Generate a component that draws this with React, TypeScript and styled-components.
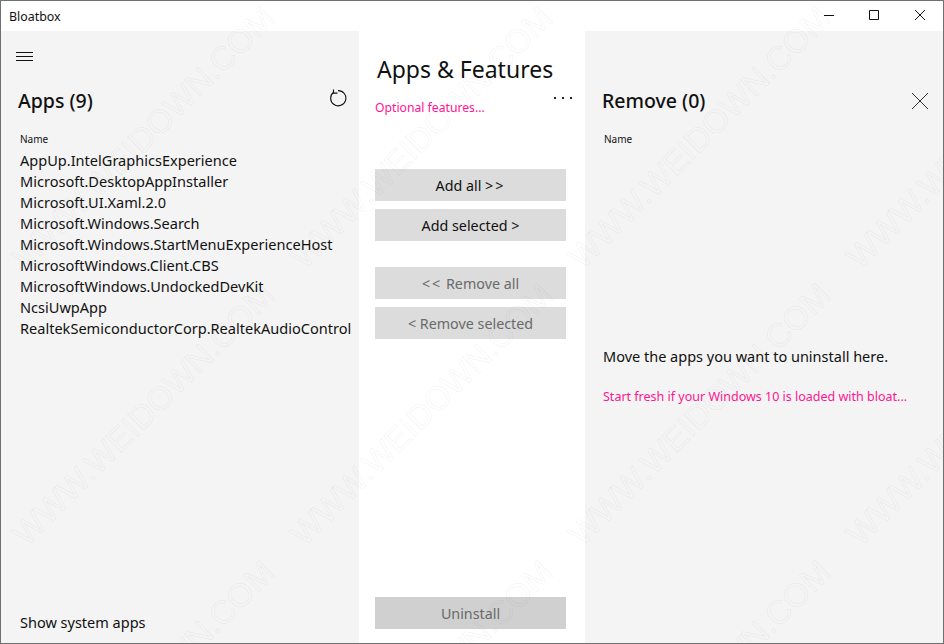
import React from 'react'
import styled, { createGlobalStyle } from 'styled-components'

const GlobalStyle = createGlobalStyle`
    html, body {
        margin: 0;
        padding: 0;
        background: #fff;
    }
    * {
        box-sizing: border-box;
    }
    svg {
        display: block;
    }
`

const Window = styled.div`
    position: relative;
    width: 944px;
    height: 644px;
    display: flex;
    flex-direction: column;
    overflow: hidden;
    background: #fff;
    border: 1px solid #707070;
    font-family: 'Noto Sans', 'Open Sans', sans-serif;
    color: #111;
`

const TitleBar = styled.header`
    height: 30px;
    flex: none;
    display: flex;
    align-items: center;
    justify-content: space-between;
    padding-left: 8px;
    font-size: 12.4px;
`

const WindowButtons = styled.div`
    display: flex;
`

const WindowButton = styled.div`
    width: 46px;
    height: 30px;
    padding-bottom: 2px;
    display: flex;
    align-items: center;
    justify-content: center;
`

const Columns = styled.main`
    flex: 1;
    display: grid;
    grid-template-columns: 358px 226px 1fr;
    min-height: 0;
`

const SidePanel = styled.section`
    position: relative;
    background: #f4f4f4;
    display: flex;
    flex-direction: column;
`

const LeftPanel = styled(SidePanel)`
    padding: 20px 0 11px 17px;
`

const RightPanel = styled(SidePanel)`
    padding: 58px 0 0 17px;
`

const Menu = styled.div`
    width: 17px;
    height: 12px;
    margin: 0 0 26px -2px;
`

const PanelHead = styled.div`
    display: flex;
    justify-content: space-between;
    align-items: center;
    padding-right: 11px;
`

const RefreshButton = styled.div`
    margin: -6px 1px 0 0;
`

const PanelTitle = styled.h2`
    margin: 0;
    font-size: 19.5px;
    line-height: 24px;
    font-weight: 500;
`

const ColumnLabel = styled.div`
    font-size: 10px;
    line-height: 14px;
    margin: 19px 0 4px 2px;
`

const AppList = styled.ul`
    list-style: none;
    margin: 0 0 0 2px;
    padding: 0;
    flex: 1;
`

const AppRow = styled.li`
    font-size: 14.55px;
    line-height: 21px;
    white-space: nowrap;
`

const Footer = styled.div`
    font-size: 14.5px;
    line-height: 20px;
    margin-left: 2px;
`

const CenterPanel = styled.section`
    position: relative;
    display: flex;
    flex-direction: column;
    padding: 22px 19px 14px 16px;
`

const Heading = styled.h1`
    margin: 0 0 0 2px;
    font-size: 23px;
    line-height: 32px;
    font-weight: 400;
`

const Link = styled.a`
    color: #ff1493;
    font-size: 12.5px;
    line-height: 18px;
`

const OptionalLink = styled(Link)`
    margin-top: 14px;
    font-size: 12.2px;
`

const More = styled.div`
    position: absolute;
    top: 66px;
    right: 13px;
    display: flex;
    gap: 6px;
`

const Dot = styled.span`
    width: 2px;
    height: 2px;
    background: #222;
`

const Actions = styled.div`
    display: flex;
    flex-direction: column;
    margin-top: 52px;
`

const Action = styled.button<{ $disabled?: boolean; $gap?: number }>`
    height: 32px;
    margin-bottom: ${(props) => props.$gap ?? 8}px;
    border: 0;
    padding: 0;
    font-family: inherit;
    font-size: 14.3px;
    background: #dcdcdc;
    color: ${(props) => (props.$disabled ? '#6a6a6a' : '#111')};
`

const UninstallButton = styled(Action)`
    margin-top: auto;
    margin-bottom: 0;
    background: #d0d0d0;
`

const Chevrons = styled.span`
    letter-spacing: 2px;
`

const RemoveMessage = styled.p`
    margin: 196px 0 0 1px;
    font-size: 14.5px;
    line-height: 20px;
`

const BloatLink = styled(Link)`
    margin: 22px 0 0 1px;
`

const CloseButton = styled.div`
    margin-right: 4px;
`

const Watermark = styled.div`
    position: absolute;
    inset: 0;
    overflow: hidden;
    pointer-events: none;
`

const Stamp = styled.span`
    position: absolute;
    font-family: 'Liberation Sans', sans-serif;
    font-size: 33px;
    line-height: 1;
    white-space: nowrap;
    color: transparent;
    -webkit-text-stroke: 1px rgba(0, 0, 0, 0.05);
    transform: rotate(-45deg);
    transform-origin: left bottom;
`

const apps = [
    'AppUp.IntelGraphicsExperience',
    'Microsoft.DesktopAppInstaller',
    'Microsoft.UI.Xaml.2.0',
    'Microsoft.Windows.Search',
    'Microsoft.Windows.StartMenuExperienceHost',
    'MicrosoftWindows.Client.CBS',
    'MicrosoftWindows.UndockedDevKit',
    'NcsiUwpApp',
    'RealtekSemiconductorCorp.RealtekAudioControl',
]

const stampColumns = [29, 307, 585, 863]
const stampRows = [240, 517, 794]

export default function App(): JSX.Element {
    return (
        <Window>
            <GlobalStyle />
            <TitleBar>
                Bloatbox
                <WindowButtons>
                    <WindowButton>
                        <svg width="12" height="10" viewBox="0 0 12 10">
                            <path d="M2 5.5h10" stroke="#111" fill="none" />
                        </svg>
                    </WindowButton>
                    <WindowButton>
                        <svg width="10" height="10" viewBox="0 0 10 10">
                            <path d="M.5.5h9v9h-9z" stroke="#111" fill="none" />
                        </svg>
                    </WindowButton>
                    <WindowButton>
                        <svg width="10" height="10" viewBox="0 0 10 10">
                            <path d="M0 0l10 10M10 0L0 10" stroke="#111" fill="none" />
                        </svg>
                    </WindowButton>
                </WindowButtons>
            </TitleBar>
            <Columns>
                <LeftPanel>
                    <Menu>
                        <svg width="17" height="12" viewBox="0 0 17 12">
                            <path d="M0 1.5h17M0 5.5h17M0 9.5h17" stroke="#111" fill="none" />
                        </svg>
                    </Menu>
                    <PanelHead>
                        <PanelTitle>Apps (9)</PanelTitle>
                        <RefreshButton>
                            <svg width="18" height="18" viewBox="0 0 18 18">
                                <path
                                    d="M4.6 3.2A7.6 7.6 0 1 0 9 1.6"
                                    stroke="#111"
                                    strokeWidth="1.1"
                                    fill="none"
                                />
                                <path d="M4.5 .5v3.6h4" stroke="#111" strokeWidth="1.1" fill="none" />
                            </svg>
                        </RefreshButton>
                    </PanelHead>
                    <ColumnLabel>Name</ColumnLabel>
                    <AppList>
                        {apps.map((app) => (
                            <AppRow key={app}>{app}</AppRow>
                        ))}
                    </AppList>
                    <Footer>Show system apps</Footer>
                </LeftPanel>
                <CenterPanel>
                    <Heading>Apps &amp; Features</Heading>
                    <OptionalLink>Optional features...</OptionalLink>
                    <More>
                        <Dot />
                        <Dot />
                        <Dot />
                    </More>
                    <Actions>
                        <Action>
                            Add all <Chevrons>&gt;&gt;</Chevrons>
                        </Action>
                        <Action $gap={26}>Add selected &gt;</Action>
                        <Action $disabled>
                            <Chevrons>&lt;&lt;</Chevrons> Remove all
                        </Action>
                        <Action $disabled>&lt; Remove selected</Action>
                    </Actions>
                    <UninstallButton $disabled>Uninstall</UninstallButton>
                </CenterPanel>
                <RightPanel>
                    <PanelHead>
                        <PanelTitle>Remove (0)</PanelTitle>
                        <CloseButton>
                            <svg width="16" height="16" viewBox="0 0 16 16">
                                <path d="M0 0l16 16M16 0L0 16" stroke="#333" fill="none" />
                            </svg>
                        </CloseButton>
                    </PanelHead>
                    <ColumnLabel>Name</ColumnLabel>
                    <RemoveMessage>Move the apps you want to uninstall here.</RemoveMessage>
                    <BloatLink>Start fresh if your Windows 10 is loaded with bloat...</BloatLink>
                </RightPanel>
            </Columns>
            <Watermark>
                {stampRows.map((top) =>
                    stampColumns.map((left) => (
                        <Stamp key={`${left}-${top}`} style={{ left, top }}>
                            WWW.WEIDOWN.COM
                        </Stamp>
                    )),
                )}
            </Watermark>
        </Window>
    )
}
